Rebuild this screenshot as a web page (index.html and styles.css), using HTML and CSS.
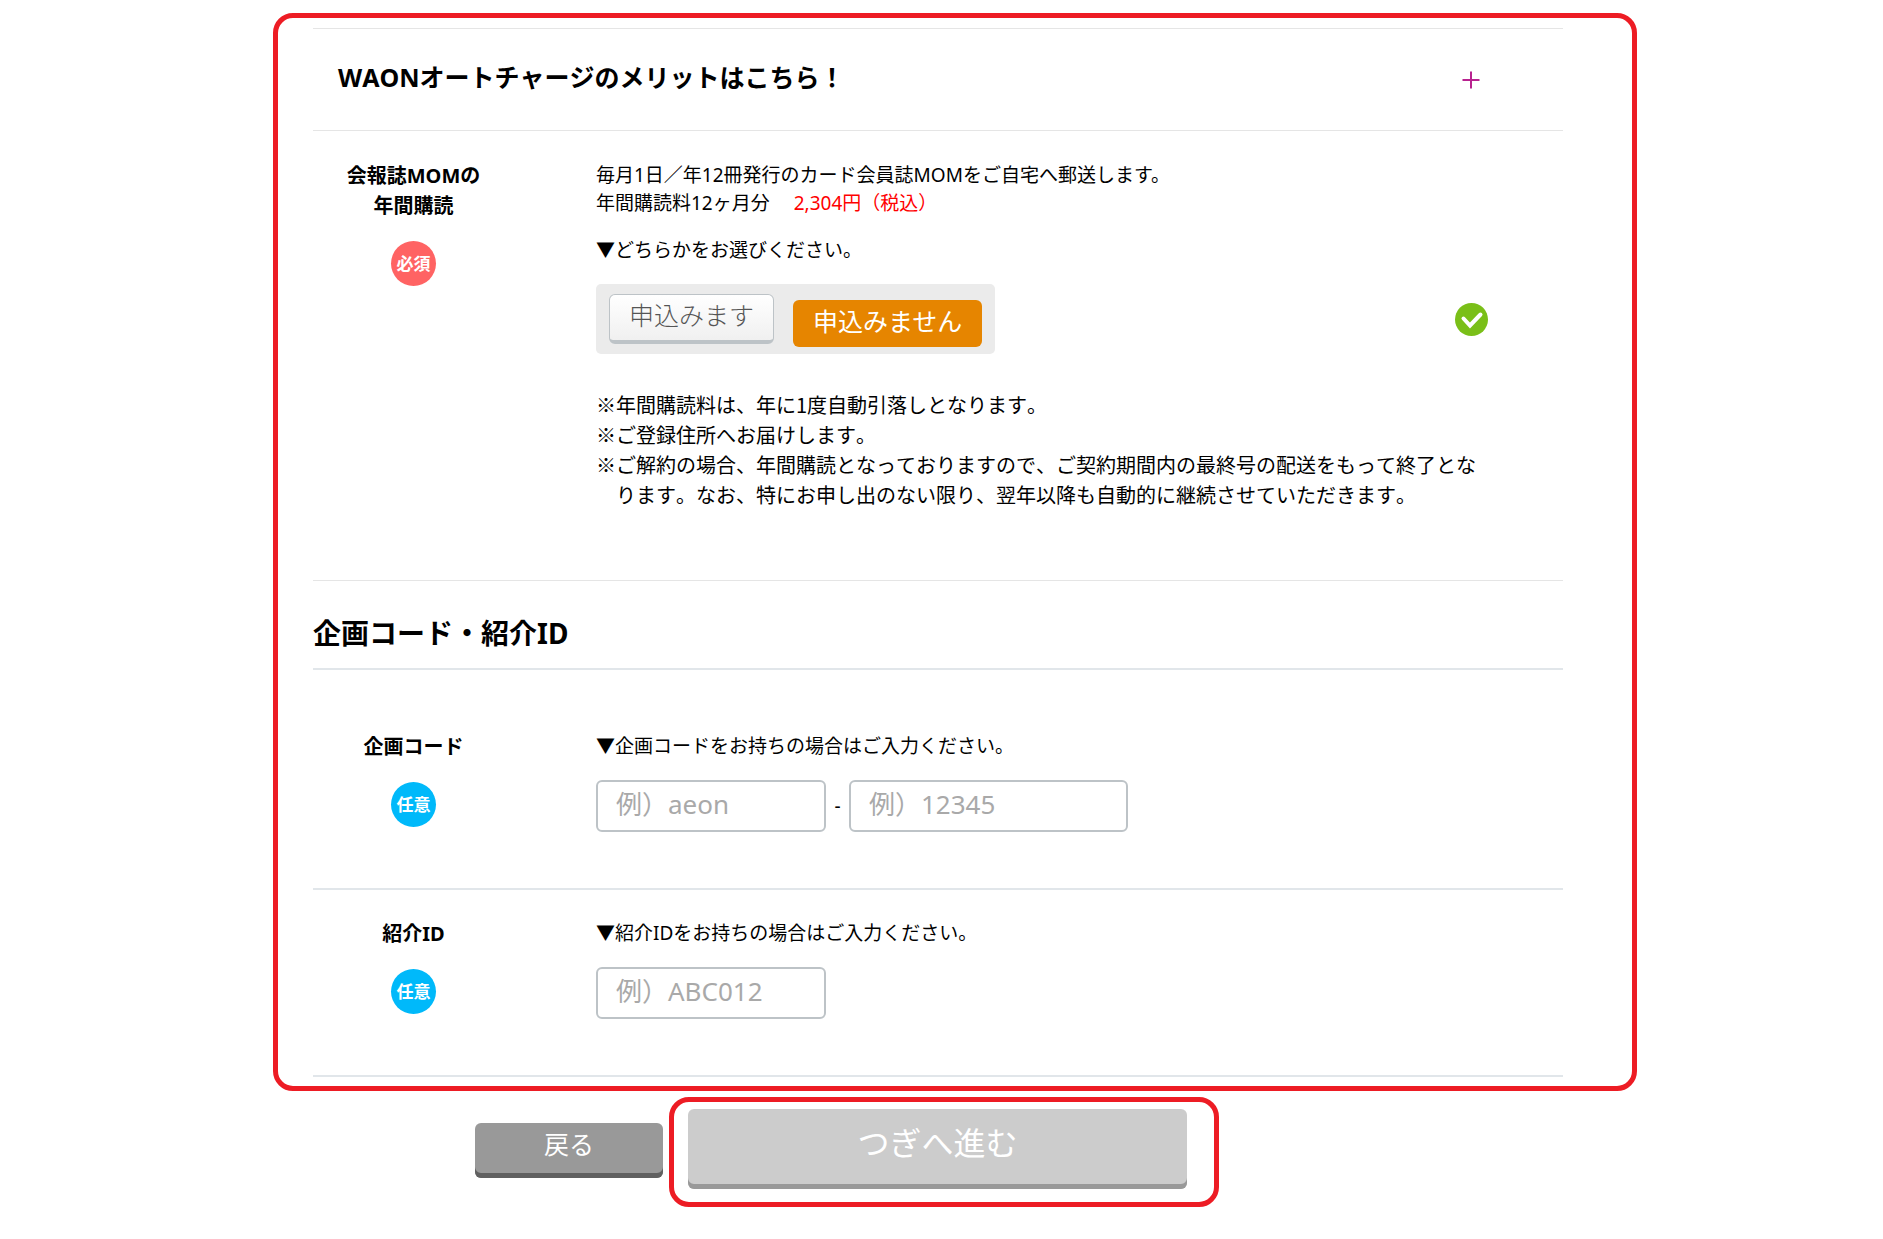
FILE: index.html
```
<!DOCTYPE html>
<html lang="ja">
<head>
<meta charset="utf-8">
<meta name="viewport" content="width=device-width, initial-scale=1">
<title>企画コード・紹介ID</title>
<link rel="stylesheet" href="styles.css">
</head>
<body>
<form class="page">
  <main class="panel">
    <button type="button" class="accordion" aria-expanded="false">
      <span class="accordion-text">WAONオートチャージのメリットはこちら！</span>
      <svg class="plus" viewBox="0 0 18 18" aria-hidden="true"><path d="M9 0.5v17M0.5 9h17"/></svg>
    </button>

    <section class="row row-magazine">
      <div class="row-head">
        <h3 class="row-label" id="mom-label">会報誌MOMの<br>年間購読</h3>
        <span class="badge badge-required">必須</span>
      </div>
      <div class="row-body">
        <p class="lead">毎月1日／年12冊発行のカード会員誌MOMをご自宅へ郵送します。<br>年間購読料12ヶ月分　 <span class="price">2,304円（税込）</span></p>
        <p class="guide">▼どちらかをお選びください。</p>
        <div class="choice-line">
          <div class="choices" role="group" aria-labelledby="mom-label">
            <button type="button" class="choice" aria-pressed="false">申込みます</button>
            <button type="button" class="choice choice-on" aria-pressed="true">申込みません</button>
          </div>
          <svg class="check" viewBox="0 0 33 33" role="img" aria-label="入力済み"><circle cx="16.5" cy="16.5" r="16.5"/><path d="M8.500 15.500l6.500 7 10.500-11"/></svg>
        </div>
        <ul class="notes">
          <li>※年間購読料は、年に1度自動引落しとなります。</li>
          <li>※ご登録住所へお届けします。</li>
          <li>※ご解約の場合、年間購読となっておりますので、ご契約期間内の最終号の配送をもって終了となります。なお、特にお申し出のない限り、翌年以降も自動的に継続させていただきます。</li>
        </ul>
      </div>
    </section>

    <h2 class="section-title">企画コード・紹介ID</h2>

    <section class="row row-plan">
      <div class="row-head">
        <label class="row-label" for="plan-a">企画コード</label>
        <span class="badge">任意</span>
      </div>
      <div class="row-body">
        <p class="guide">▼企画コードをお持ちの場合はご入力ください。</p>
        <div class="fields">
          <input class="field" id="plan-a" type="text" placeholder="例）aeon">
          <span class="dash">-</span>
          <input class="field field-wide" type="text" aria-label="企画コード（番号）" placeholder="例）12345">
        </div>
      </div>
    </section>

    <section class="row row-referral">
      <div class="row-head">
        <label class="row-label" for="referral">紹介ID</label>
        <span class="badge">任意</span>
      </div>
      <div class="row-body">
        <p class="guide">▼紹介IDをお持ちの場合はご入力ください。</p>
        <div class="fields">
          <input class="field" id="referral" type="text" placeholder="例）ABC012">
        </div>
      </div>
    </section>
  </main>

  <div class="actions">
    <button type="button" class="back">戻る</button>
    <div class="next-frame">
      <button type="submit" class="next">つぎへ進む</button>
    </div>
  </div>
</form>
</body>
</html>
```
FILE: styles.css
```
* { box-sizing: border-box; }

body {
  margin: 0;
  background: #fff;
  color: #000;
  font-family: "Noto Sans", "Noto Sans CJK JP", sans-serif;
  font-size: 19px;
  font-weight: 400;
  line-height: 28px;
}

h2, h3, p, ul { margin: 0; padding: 0; }
button, input { font: inherit; margin: 0; }
button { cursor: pointer; }

.page { padding: 13px 246px 32px 273px; }

.panel {
  padding: 10px 69px 9px 35px;
  border: 5px solid #ed1c24;
  border-radius: 20px;
}

.accordion {
  display: flex;
  align-items: center;
  justify-content: space-between;
  width: 100%;
  height: 103px;
  padding: 0 83px 0 25px;
  border: solid #e5e5e5;
  border-width: 1px 0;
  background: none;
  color: #000;
  font-size: 25px;
  font-weight: 700;
  font-kerning: none;
}
.accordion-text { padding-bottom: 6px; }

.plus { width: 18px; height: 18px; }
.plus path { stroke: #b8228f; stroke-width: 2; }

.row {
  display: grid;
  grid-template-columns: 201px 1fr;
  column-gap: 82px;
  padding-right: 75px;
}

.row-magazine {
  padding-top: 30px;
  padding-bottom: 70px;
  border-bottom: 1px solid #e5e5e5;
}

.row-plan, .row-referral {
  padding-bottom: 56px;
  border-bottom: 2px solid #e1e6ea;
}
.row-plan { padding-top: 62px; }
.row-referral { padding-top: 29px; }

.row-head {
  display: flex;
  flex-direction: column;
  align-items: center;
  gap: 20px;
}

.row-label {
  font-size: 20px;
  font-weight: 700;
  line-height: 30px;
  text-align: center;
}

.badge {
  width: 45px;
  height: 45px;
  border-radius: 50%;
  background: #00b9fa;
  color: #fff;
  font-size: 17px;
  font-weight: 700;
  line-height: 45px;
  text-align: center;
}
.badge-required { background: #ff6363; }

.lead { margin-bottom: 19px; }
.price { color: #f00; }
.guide { margin-bottom: 20px; }

.choice-line {
  display: flex;
  align-items: center;
  justify-content: space-between;
}

.choices {
  display: flex;
  align-items: flex-start;
  gap: 19px;
  padding: 10px 13px 7px;
  border-radius: 5px;
  background: #ebebeb;
}

.choice {
  height: 50px;
  padding: 0 19px 6px;
  border: 1px solid #bdc3c7;
  border-bottom-width: 4px;
  border-radius: 6px;
  background: linear-gradient(#fff, #f0f0f0);
  color: #555;
  font-size: 25px;
  font-weight: 300;
  line-height: 38px;
}

.choice-on {
  height: 47px;
  margin-top: 6px;
  border: 0;
  padding: 0 20px 6px;
  background: #e68500;
  color: #fff;
  font-weight: 400;
}

.check { width: 33px; height: 33px; }
.check circle { fill: #7abf18; }
.check path {
  fill: none;
  stroke: #fff;
  stroke-width: 4;
  stroke-linecap: round;
}

.notes {
  margin-top: 36px;
  list-style: none;
  font-family: "Noto Sans CJK JP", "Noto Sans", sans-serif;
  font-size: 20px;
  font-kerning: none;
  line-height: 30px;
}
.notes li { padding-left: 20px; text-indent: -20px; }

.section-title {
  padding: 31px 0 14px;
  border-bottom: 2px solid #e1e6ea;
  font-size: 28px;
  line-height: 42px;
}

.fields { display: flex; align-items: center; }

.field {
  width: 230px;
  height: 52px;
  padding: 0 18px 4px;
  border: 2px solid #bdc3c7;
  border-radius: 6px;
  background: #fff;
  color: #000;
  font-size: 26px;
}
.field-wide { width: 279px; }
.field::placeholder { color: #a9a9a9; opacity: 1; }

.dash { width: 23px; text-align: center; }

.actions {
  display: flex;
  align-items: center;
  gap: 6px;
  margin-top: 6px;
  padding-left: 202px;
}

.back, .next {
  border: 0;
  border-radius: 6px;
  color: #fff;
}

.back {
  width: 188px;
  height: 55px;
  margin-bottom: 4px;
  padding: 0 0 13px;
  background: #999;
  box-shadow: inset 0 -5px #606060;
  font-size: 25px;
}

.next-frame {
  padding: 7px 27px 13px 14px;
  border: 5px solid #ed1c24;
  border-radius: 20px;
}

.next {
  display: block;
  width: 499px;
  height: 80px;
  padding: 0 0 12px;
  background: #ccc;
  box-shadow: inset 0 -5px #999;
  font-size: 32px;
}
```
